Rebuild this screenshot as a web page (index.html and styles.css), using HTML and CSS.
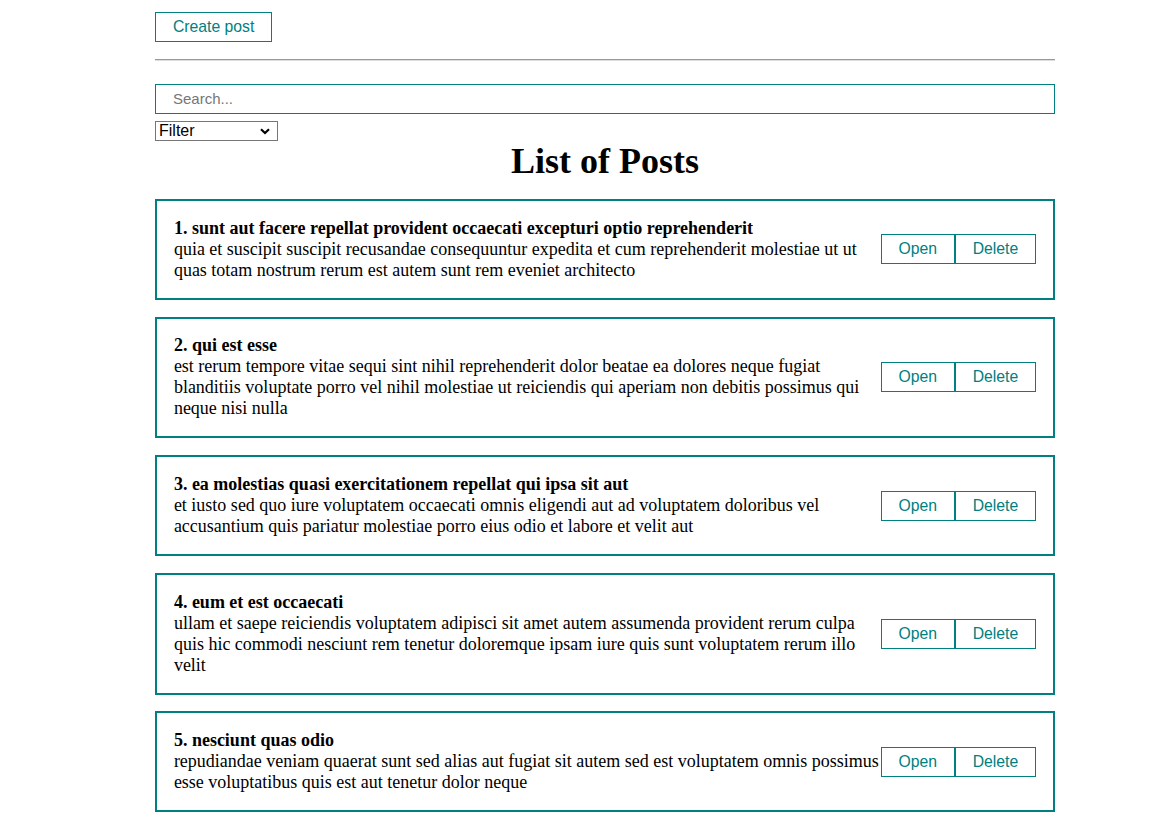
FILE: index.html
```html
<!DOCTYPE html>
<html lang="en">
<head>
<meta charset="utf-8">
<title>Posts</title>
<link rel="stylesheet" href="styles.css">
</head>
<body>
<div class="app">
  <button class="btn">Create post</button>
  <hr class="divider">
  <div class="filters">
    <input class="search" type="text" placeholder="Search...">
    <select class="sort">
      <option value="">Filter</option>
      <option value="title">By name</option>
      <option value="body">By description</option>
    </select>
  </div>
  <h1 class="title">List of Posts</h1>
  <div class="posts">
    <div class="post">
      <div class="post-content">
        <strong>1. sunt aut facere repellat provident occaecati excepturi optio reprehenderit</strong>
        <div>quia et suscipit suscipit recusandae consequuntur expedita et cum reprehenderit molestiae ut ut quas totam nostrum rerum est autem sunt rem eveniet architecto</div>
      </div>
      <div class="post-btns">
        <button class="btn">Open</button><button class="btn">Delete</button>
      </div>
    </div>
    <div class="post">
      <div class="post-content">
        <strong>2. qui est esse</strong>
        <div>est rerum tempore vitae sequi sint nihil reprehenderit dolor beatae ea dolores neque fugiat blanditiis voluptate porro vel nihil molestiae ut reiciendis qui aperiam non debitis possimus qui neque nisi nulla</div>
      </div>
      <div class="post-btns">
        <button class="btn">Open</button><button class="btn">Delete</button>
      </div>
    </div>
    <div class="post">
      <div class="post-content">
        <strong>3. ea molestias quasi exercitationem repellat qui ipsa sit aut</strong>
        <div>et iusto sed quo iure voluptatem occaecati omnis eligendi aut ad voluptatem doloribus vel accusantium quis pariatur molestiae porro eius odio et labore et velit aut</div>
      </div>
      <div class="post-btns">
        <button class="btn">Open</button><button class="btn">Delete</button>
      </div>
    </div>
    <div class="post">
      <div class="post-content">
        <strong>4. eum et est occaecati</strong>
        <div>ullam et saepe reiciendis voluptatem adipisci sit amet autem assumenda provident rerum culpa quis hic commodi nesciunt rem tenetur doloremque ipsam iure quis sunt voluptatem rerum illo velit</div>
      </div>
      <div class="post-btns">
        <button class="btn">Open</button><button class="btn">Delete</button>
      </div>
    </div>
    <div class="post">
      <div class="post-content">
        <strong>5. nesciunt quas odio</strong>
        <div>repudiandae veniam quaerat sunt sed alias aut fugiat sit autem sed est voluptatem omnis possimus esse voluptatibus quis est aut tenetur dolor neque</div>
      </div>
      <div class="post-btns">
        <button class="btn">Open</button><button class="btn">Delete</button>
      </div>
    </div>
  </div>
</div>
</body>
</html>
```

FILE: styles.css
```css
* {
  box-sizing: border-box;
}

body {
  margin: 0;
  background: #fff;
  color: #000;
  font-family: "Liberation Serif", "Times New Roman", serif;
  font-size: 18px;
  line-height: 21px;
}

.app {
  width: 900px;
  margin-left: 155px;
  padding-top: 12px;
}

.btn {
  display: inline-block;
  height: 30px;
  padding: 5px 16.875px;
  margin: 0;
  border: 1px solid teal;
  border-radius: 0;
  background: transparent;
  color: teal;
  font-family: "Liberation Sans", Arial, sans-serif;
  font-size: 15.75px;
  line-height: 18px;
  cursor: pointer;
}

.divider {
  margin: 17px 0 23px;
  border: 0;
  border-top: 1px solid #9a9a9a;
  border-bottom: 1px solid #dcdcdc;
  height: 0;
}

.filters {
  display: flex;
  flex-direction: column;
  align-items: flex-start;
  gap: 7px;
}

.search {
  width: 100%;
  height: 30px;
  padding: 4px 17px 6px;
  border: 1px solid teal;
  border-radius: 0;
  font-family: "Liberation Sans", Arial, sans-serif;
  font-size: 15px;
  color: #000;
  outline: none;
}

.search::placeholder {
  color: #767676;
}

.sort {
  -webkit-appearance: none;
  appearance: none;
  width: 123px;
  height: 20px;
  padding: 0 20px 0 3px;
  border: 1px solid #767676;
  border-radius: 0;
  background-color: #fff;
  background-image: url("data:image/svg+xml;utf8,<svg xmlns='http://www.w3.org/2000/svg' width='10' height='7' viewBox='0 0 10 7'><path d='M1 1.2 L5 5 L9 1.2' fill='none' stroke='black' stroke-width='2.2'/></svg>");
  background-repeat: no-repeat;
  background-position: right 7px center;
  color: #000;
  font-family: "Liberation Sans", Arial, sans-serif;
  font-size: 16px;
  line-height: 18px;
}

.title {
  margin: 0;
  text-align: center;
  font-size: 36px;
  line-height: 41px;
  font-weight: bold;
}

.post {
  display: flex;
  align-items: center;
  justify-content: space-between;
  margin-top: 16.875px;
  padding: 16.875px;
  border: 2px solid teal;
}

.post-content {
  flex: 1;
  min-width: 0;
}

.post-content strong {
  font-weight: bold;
}

.post-btns {
  display: flex;
  flex-shrink: 0;
}
```
